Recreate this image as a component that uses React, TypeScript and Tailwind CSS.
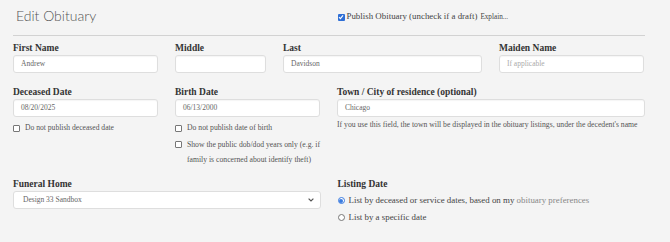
const serif = { fontFamily: '"Liberation Serif", "Times New Roman", serif' }

function Label({ children }: { children: React.ReactNode }) {
  return <div className="text-[9.5px] font-bold leading-[14px] text-[#333]">{children}</div>
}

function Field({ value, placeholder }: { value?: string; placeholder?: string }) {
  return (
    <div className="h-[18px] bg-white border border-[#dedede] rounded-[3px] shadow-[inset_0_1px_1px_rgba(0,0,0,0.04)] flex items-center pl-[7px] text-[7.5px]">
      {value ? <span className="text-[#666]">{value}</span> : <span className="text-[#aaa]">{placeholder}</span>}
    </div>
  )
}

function Box({ checked = false }: { checked?: boolean }) {
  if (checked)
    return (
      <span className="w-[7px] h-[7px] rounded-[1px] bg-[#2f6fd6] flex items-center justify-center shrink-0">
        <svg width="6" height="6" viewBox="0 0 6 6">
          <path d="M1 3.2 L2.4 4.6 L5 1.4" stroke="white" strokeWidth="1.1" fill="none" />
        </svg>
      </span>
    )
  return <span className="block w-[7px] h-[7px] rounded-[1px] border border-[#777] bg-white shrink-0" />
}

function Radio({ on = false }: { on?: boolean }) {
  return on ? (
    <span className="w-[7px] h-[7px] rounded-full border border-[#3a7be0] bg-white flex items-center justify-center shrink-0">
      <span className="w-[4px] h-[4px] rounded-full bg-[#3a7be0]" />
    </span>
  ) : (
    <span className="w-[7px] h-[7px] rounded-full border border-[#777] bg-white shrink-0" />
  )
}

export default function App() {
  return (
    <div className="w-[670px] h-[242px] bg-[#f4f4f4] overflow-hidden" style={serif}>
      <div className="mx-[13px] w-[632px] h-[36px] border-b border-[#d2d2d2] grid grid-cols-[1fr_1fr] gap-x-[17px]">
        <div
          className="pl-[3px] pt-[8px] text-[14px] leading-[16px] font-light text-[#555]"
          style={{ fontFamily: 'Lato, "Open Sans", sans-serif' }}
        >
          Edit Obituary
        </div>
        <div className="pt-[11px] flex items-center gap-[2px] h-[23px] text-[8.9px] text-[#444]">
          <Box checked />
          <span>Publish Obituary (uncheck if a draft)</span>
          <span className="text-[7.2px] ml-[1px]">Explain...</span>
        </div>
      </div>

      <div className="mx-[13px] w-[632px] mt-[5px] grid grid-cols-[145px_91px_199px_145px] gap-x-[17px]">
        <div>
          <Label>First Name</Label>
          <Field value="Andrew" />
        </div>
        <div>
          <Label>Middle</Label>
          <Field />
        </div>
        <div>
          <Label>Last</Label>
          <Field value="Davidson" />
        </div>
        <div>
          <Label>Maiden Name</Label>
          <Field placeholder="If applicable" />
        </div>
      </div>

      <div className="mx-[13px] w-[632px] mt-[12px] grid grid-cols-[145px_145px_1fr] gap-x-[17px] items-start">
        <div>
          <Label>Deceased Date</Label>
          <Field value="08/20/2025" />
          <div className="mt-[5px] flex items-center gap-[5px] text-[7.6px] leading-[12px] text-[#555]">
            <Box />
            <span>Do not publish deceased date</span>
          </div>
        </div>
        <div>
          <Label>Birth Date</Label>
          <Field value="06/13/2000" />
          <div className="mt-[5px] flex items-center gap-[5px] text-[7.7px] leading-[12px] text-[#555]">
            <Box />
            <span>Do not publish date of birth</span>
          </div>
          <div className="mt-[3px] flex items-start gap-[5px] text-[7.7px] leading-[15px] text-[#555]">
            <span className="flex pt-[4px] shrink-0">
              <Box />
            </span>
            <span>Show the public dob/dod years only (e.g. if family is concerned about identify theft)</span>
          </div>
        </div>
        <div>
          <Label>Town / City of residence (optional)</Label>
          <Field value="Chicago" />
          <div className="mt-[2px] text-[7.7px] leading-[12px] text-[#555] whitespace-nowrap">
            If you use this field, the town will be displayed in the obituary listings, under the decedent's name
          </div>
        </div>
      </div>

      <div className="mx-[13px] w-[632px] mt-[10px] grid grid-cols-[1fr_1fr] gap-x-[17px] items-start">
        <div>
          <Label>Funeral Home</Label>
          <div className="h-[18px] bg-white border border-[#dedede] rounded-[3px] flex items-center justify-between pl-[9px] pr-[6px] text-[7.5px] text-[#666]">
            <span>Design 33 Sandbox</span>
            <svg width="6" height="4" viewBox="0 0 6 4">
              <path d="M0.6 0.6 L3 3 L5.4 0.6" stroke="#555" strokeWidth="1.2" fill="none" />
            </svg>
          </div>
        </div>
        <div>
          <Label>Listing Date</Label>
          <div className="mt-[1px] flex items-center gap-[4px] text-[8.9px] leading-[17px] text-[#444]">
            <Radio on />
            <span>
              List by deceased or service dates, based on my <span className="text-[#888]">obituary preferences</span>
            </span>
          </div>
          <div className="flex items-center gap-[4px] text-[8.9px] leading-[17px] text-[#444]">
            <Radio />
            <span>List by a specific date</span>
          </div>
        </div>
      </div>
    </div>
  )
}
